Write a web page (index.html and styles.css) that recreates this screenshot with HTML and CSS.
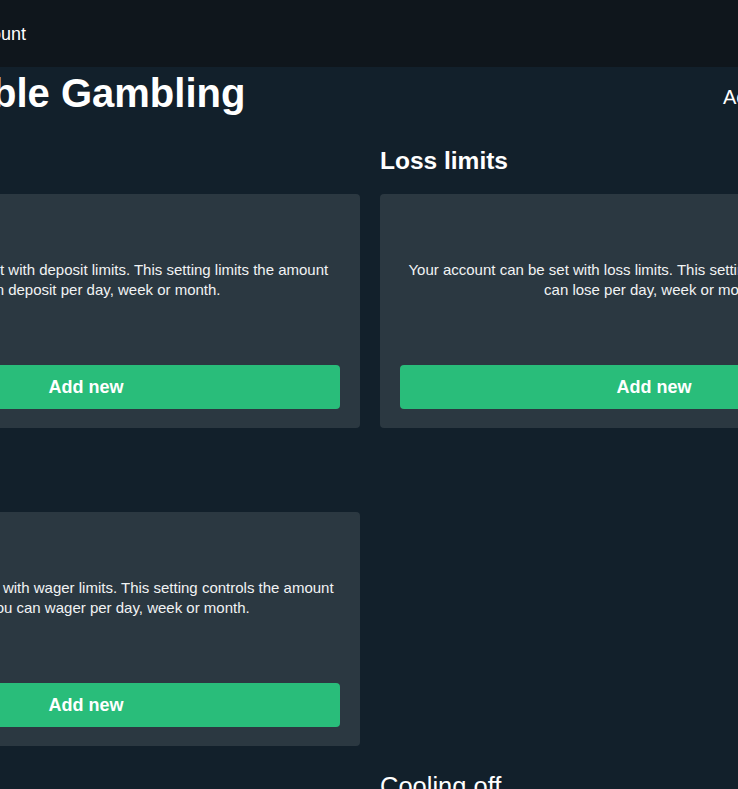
FILE: index.html
```html
<!DOCTYPE html>
<html lang="en">
<head>
<meta charset="utf-8">
<title>Responsible Gambling</title>
<link rel="stylesheet" href="styles.css">
</head>
<body>
<header class="topbar">
  <div class="topbar-inner">
    <a class="topbar-link" href="#">Account</a>
  </div>
</header>
<main class="page">
  <div class="title-row">
    <h1 class="page-title">Responsible Gambling</h1>
    <a class="title-link" href="#">Account history</a>
  </div>

  <section class="limits-grid">
    <div class="limit">
      <h2 class="limit-title">Deposit limits</h2>
      <div class="card">
        <p class="card-text">Your account can be set with deposit limits. This setting limits the amount you can deposit per day, week or month.</p>
        <button class="btn" type="button">Add new</button>
      </div>
    </div>
    <div class="limit">
      <h2 class="limit-title">Loss limits</h2>
      <div class="card">
        <p class="card-text">Your account can be set with loss limits. This setting limits the amount you can lose per day, week or month.</p>
        <button class="btn" type="button">Add new</button>
      </div>
    </div>
    <div class="limit">
      <h2 class="limit-title">Wager limits</h2>
      <div class="card">
        <p class="card-text">Your account can be set with wager limits. This setting controls the amount of money you can wager per day, week or month.</p>
        <button class="btn" type="button">Add new</button>
      </div>
    </div>
  </section>

  <section class="other-grid">
    <div class="other other-right">
      <h2 class="other-title">Cooling off</h2>
    </div>
  </section>
</main>
</body>
</html>
```

FILE: styles.css
```css
html, body {
  margin: 0;
  padding: 0;
}
body {
  background: #12202b;
  color: #ffffff;
  font-family: "Liberation Sans", Arial, sans-serif;
  overflow: hidden;
  width: 738px;
  height: 789px;
}
.topbar {
  background: #0f161c;
  height: 67px;
  display: flex;
  align-items: center;
}
.topbar-inner {
  width: 1116px;
  margin-left: -188px;
  padding-left: 149px;
  box-sizing: border-box;
  flex-shrink: 0;
}
.topbar-link {
  color: #ffffff;
  text-decoration: none;
  font-size: 18px;
  line-height: 22px;
}
.page {
  width: 1116px;
  margin-left: -188px;
}
.title-row {
  display: flex;
  align-items: center;
  margin-top: 3px;
}
.page-title {
  margin: 0;
  font-size: 40px;
  line-height: 46px;
  font-weight: 700;
  white-space: nowrap;
}
.title-link {
  margin-left: auto;
  width: 205px;
  margin-top: 8px;
  color: #ffffff;
  text-decoration: none;
  font-size: 20px;
  line-height: 23px;
  white-space: nowrap;
}
.limits-grid {
  display: grid;
  grid-template-columns: 548px 548px;
  column-gap: 20px;
  row-gap: 37px;
  margin-top: 31px;
}
.limit-title {
  margin: 0 0 19px;
  font-size: 24.5px;
  line-height: 28px;
  font-weight: 700;
}
.card {
  background: #2b3841;
  border-radius: 4px;
  height: 234px;
  box-sizing: border-box;
  padding: 20px 20px 19px;
  display: flex;
  flex-direction: column;
}
.card-text {
  margin: 46px 0 0;
  font-size: 15px;
  line-height: 20px;
  text-align: center;
  color: #f1f3f4;
}
.btn {
  margin-top: auto;
  height: 44px;
  border: 0;
  border-radius: 4px;
  background: #29bd7a;
  color: #ffffff;
  font-family: "Liberation Sans", Arial, sans-serif;
  font-size: 18px;
  font-weight: 700;
  cursor: pointer;
}
.other-grid {
  display: grid;
  grid-template-columns: 548px 548px;
  column-gap: 20px;
  margin-top: 26px;
}
.other-right {
  grid-column: 2;
}
.other-title {
  margin: 0;
  font-size: 25.5px;
  line-height: 28px;
  font-weight: 400;
}
```
